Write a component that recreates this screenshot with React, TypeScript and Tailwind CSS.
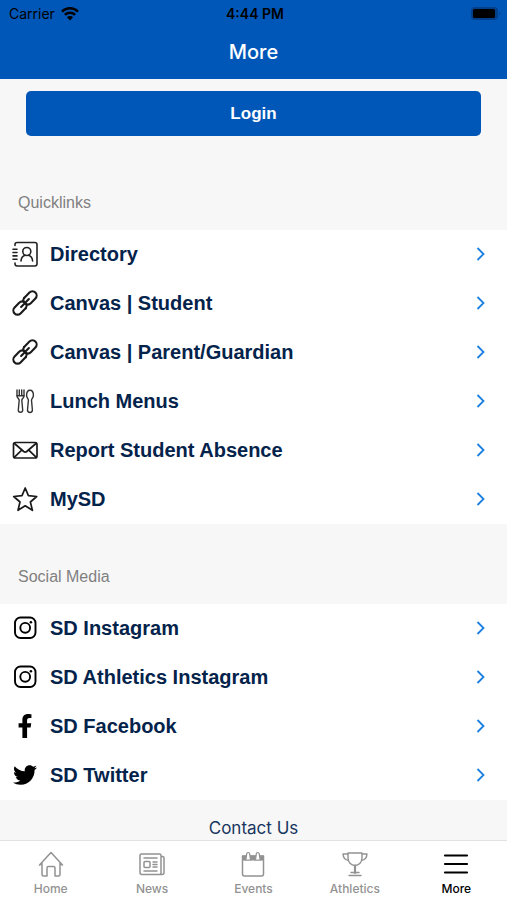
import type { ReactNode } from "react";
import { FaFacebookF, FaTwitter } from "react-icons/fa";
import { clsx } from "clsx";

function DirectoryIcon() {
  return (
    <svg width="26" height="26" viewBox="0 0 26 26" fill="none" stroke="#222" strokeWidth="1.6" strokeLinecap="round">
      <path d="M3 4.500V3.200Q3 1.500 5.200 1.500H22.800Q25 1.500 25 3.700V22.800Q25 25 22.800 25H5.200Q3 25 3 22.800V22" />
      <path d="M1 8.200h4M1 11.500h4M1 14.900h4M1 18.200h4" />
      <circle cx="14.800" cy="10.500" r="4" />
      <path d="M9 20c.2-3 1.700-5 4-5.800M20.600 20c-.2-3-1.700-5-4-5.800" />
    </svg>
  );
}

function LinkIcon() {
  return (
    <svg width="26" height="26" viewBox="0 0 26 26" fill="none" stroke="#1a1a1a" strokeWidth="2.100" strokeLinecap="round">
      <g transform="rotate(-45 13 13)">
        <path d="M10 17.200H2.500a4.200 4.200 0 0 1 0-8.400H9a4.200 4.200 0 0 1 4.200 3.600" />
        <path d="M16 8.800h7.500a4.200 4.200 0 0 1 0 8.400H17a4.200 4.200 0 0 1-4.200-3.600" />
        <path d="M10 17.200q2.200-.4 3-2.200M16 8.800q-2.200.4-3 2.200" />
        <path d="M7.500 13h4.500M14 13h4.500" />
      </g>
    </svg>
  );
}

function UtensilsIcon() {
  return (
    <svg width="26" height="26" viewBox="0 0 26 26" fill="none" stroke="#333" strokeWidth="1.400" strokeLinejoin="round" strokeLinecap="round">
      <path d="M5 2v6c0 2 2.200 2.300 2.200 4.300L6.300 22a2.200 2.200 0 0 0 4.400 0l-.9-9.700c0-2 2.200-2.300 2.200-4.300V2" />
      <path d="M7.300 2v5.500M9.700 2v5.500M5 7.800h7" />
      <path d="M18 2.200c-2.100 0-3.400 2.300-3.400 5.200 0 2.200 1.800 3 1.800 4.900L15.500 22a2.400 2.400 0 0 0 4.900 0l-.9-9.700c0-1.900 1.900-2.700 1.900-4.900 0-2.900-1.300-5.200-3.400-5.200Z" />
    </svg>
  );
}

function EnvelopeIcon() {
  return (
    <svg width="26" height="26" viewBox="0 0 26 26" fill="none" stroke="#1a1a1a" strokeWidth="1.700" strokeLinejoin="round" strokeLinecap="round">
      <rect x="1.500" y="5.500" width="23.500" height="15.500" rx="2" />
      <path d="M2.500 6.500l9.200 8q1.500 1.200 3 0L24 6.500M2.500 20.200l7.200-7M24 20.200l-7.200-7" />
    </svg>
  );
}

function StarIcon() {
  return (
    <svg width="26" height="26" viewBox="0 0 26 26" fill="none" stroke="#1a1a1a" strokeWidth="1.700" strokeLinejoin="round">
      <path d="M13.200 2l3.200 7.700 8.300.8-6.300 5.500 2 8.300-7.200-4.500L6 24.300l2-8.300-6.300-5.500 8.300-.8Z" />
    </svg>
  );
}

function InstagramIcon() {
  return (
    <svg width="26" height="26" viewBox="0 0 26 26" fill="none" stroke="#000">
      <rect x="3" y="2.500" width="20.500" height="20.500" rx="5.500" strokeWidth="1.900" />
      <circle cx="13.200" cy="12.800" r="4.900" strokeWidth="1.900" />
      <circle cx="18.900" cy="7.200" r="1.300" fill="#000" stroke="none" />
    </svg>
  );
}

function HomeIcon() {
  return (
    <svg width="26" height="26" viewBox="0 0 26 26" fill="none" stroke="currentColor" strokeWidth="1.500" strokeLinejoin="round" strokeLinecap="round">
      <path d="M4 12.500L1.500 14L13 1.500L24.500 14L22 12.500V23.500q0 1.500-1.500 1.500H17v-8q0-1.500-1.500-1.500h-5Q9 15.500 9 17v8H5.500Q4 25 4 23.500Z" />
    </svg>
  );
}

function NewsIcon() {
  return (
    <svg width="26" height="26" viewBox="0 0 26 26" fill="none" stroke="currentColor" strokeWidth="1.500" strokeLinejoin="round" strokeLinecap="round">
      <path d="M22 5V4.500q0-1.500-1.500-1.500H2.500Q1 3 1 4.500v17q0 2 2 2h20q2 0 2-2V7Q25 5.500 23.500 5.500H22v16q0 2-1.500 2" />
      <rect x="5" y="10.500" width="6" height="6" rx="1" />
      <path d="M5 7h13M14 11h4M14 13.500h4M14 16h4M5 20h13" />
    </svg>
  );
}

function EventsIcon() {
  return (
    <svg width="26" height="26" viewBox="0 0 26 26" fill="none" stroke="currentColor" strokeWidth="1.500" strokeLinejoin="round">
      <path d="M2.500 4.500h21V9.500h-21Z" fill="currentColor" stroke="none" />
      <path d="M2.500 8.500V23q0 2 2 2h17q2 0 2-2V5h-21Z" />
      <path d="M5 9q1.500-1 1.500-4.500Q6.500 1.500 8.200 1.500T9.900 4.500Q9.900 8 11.400 9ZM14.600 9q1.500-1 1.500-4.500Q16.100 1.500 17.800 1.500T19.500 4.500Q19.500 8 21 9Z" fill="#fff" strokeWidth="1.200" />
    </svg>
  );
}

function TrophyIcon() {
  return (
    <svg width="26" height="26" viewBox="0 0 26 26" fill="none" stroke="currentColor" strokeWidth="1.400" strokeLinejoin="round" strokeLinecap="round">
      <path d="M6 2h14v5c0 4.200-3 7.500-7 7.500S6 11.200 6 7Z" />
      <path d="M6 3H1c.2 3.500 1.800 6 5.500 6.300M20 3h5c-.2 3.500-1.800 6-5.500 6.300" />
      <path d="M13 14.500V22" strokeWidth="2.200" />
      <path d="M9 21.500h8M7 24.500h12" />
    </svg>
  );
}

function MenuIcon() {
  return (
    <svg width="26" height="26" viewBox="0 0 26 26" fill="none" stroke="currentColor" strokeWidth="2.200" strokeLinecap="round">
      <path d="M2 4.500h22M2 13h22M2 21.500h22" />
    </svg>
  );
}

function WifiIcon() {
  return (
    <svg width="18" height="14" viewBox="0 0 18 14" fill="none" stroke="#000" strokeWidth="2.500">
      <path d="M1 4.600a11.300 11.300 0 0 1 16 0M3.900 7.900a7.200 7.200 0 0 1 10.200 0" />
      <path d="M9 13.500L5.900 10.300a4.400 4.400 0 0 1 6.200 0Z" fill="#000" stroke="none" />
    </svg>
  );
}

function BatteryIcon() {
  return (
    <svg width="30" height="14" viewBox="0 0 30 14">
      <rect width="27" height="13" rx="4" fill="#003f8c" />
      <rect x="2" y="2" width="22" height="9" rx="1.500" fill="#000" />
      <path d="M28 4.500q2.500 2 0 4Z" fill="#003f8c" />
    </svg>
  );
}

function Chevron() {
  return (
    <svg width="10" height="14" viewBox="0 0 10 14" fill="none" stroke="#1c7fe0" strokeWidth="1.800">
      <path d="M1.500 1l6 6-6 6" />
    </svg>
  );
}

interface LinkItem {
  label: string;
  icon: ReactNode;
}

const quicklinks: LinkItem[] = [
  { label: "Directory", icon: <DirectoryIcon /> },
  { label: "Canvas | Student", icon: <LinkIcon /> },
  { label: "Canvas | Parent/Guardian", icon: <LinkIcon /> },
  { label: "Lunch Menus", icon: <UtensilsIcon /> },
  { label: "Report Student Absence", icon: <EnvelopeIcon /> },
  { label: "MySD", icon: <StarIcon /> },
];

const social: LinkItem[] = [
  { label: "SD Instagram", icon: <InstagramIcon /> },
  { label: "SD Athletics Instagram", icon: <InstagramIcon /> },
  { label: "SD Facebook", icon: <FaFacebookF size={24} /> },
  { label: "SD Twitter", icon: <FaTwitter size={24} /> },
];

const tabs: LinkItem[] = [
  { label: "Home", icon: <HomeIcon /> },
  { label: "News", icon: <NewsIcon /> },
  { label: "Events", icon: <EventsIcon /> },
  { label: "Athletics", icon: <TrophyIcon /> },
  { label: "More", icon: <MenuIcon /> },
];

function LinkSection({ title, items, className }: { title: string; items: LinkItem[]; className?: string }) {
  return (
    <section className={className}>
      <h2 className="px-[18px] pb-[15px] text-base leading-6 text-[#808080]">{title}</h2>
      <ul className="bg-white">
        {items.map((item) => (
          <li key={item.label}>
            <a href="#" className="flex h-[49px] items-center pb-px pl-3 pr-[21px] text-black">
              <span className="flex w-[26px] justify-center">{item.icon}</span>
              <span className="ml-3 flex-1 text-[20px] font-bold leading-6 text-[#04234b]">{item.label}</span>
              <Chevron />
            </a>
          </li>
        ))}
      </ul>
    </section>
  );
}

export default function App() {
  return (
    <div className="flex min-h-screen flex-col bg-[#f7f7f7] font-['Liberation_Sans',Arial,sans-serif]">
      <header className="bg-[#0057b8] font-[Inter,sans-serif]">
        <div className="grid h-7 grid-cols-3 items-center pl-[9px] pr-[6px] text-sm text-black">
          <span className="flex items-center gap-1.5">
            Carrier <WifiIcon />
          </span>
          <span className="text-center font-semibold">4:44 PM</span>
          <span className="flex justify-end">
            <BatteryIcon />
          </span>
        </div>
        <h1 className="h-[51px] pt-2.5 text-center text-[20px] font-medium leading-7 text-white">More</h1>
      </header>

      <main className="flex-1">
        <div className="px-[26px] pt-3">
          <button type="button" className="h-[45px] w-full rounded-[5px] bg-[#0057b8] text-[17px] font-bold text-white">
            Login
          </button>
        </div>
        <LinkSection title="Quicklinks" items={quicklinks} className="pt-[55px]" />
        <LinkSection title="Social Media" items={social} className="pt-[41px]" />
        <div className="pt-4 text-center font-[Inter,sans-serif]">
          <a href="#" className="text-[17px] leading-6 text-[#17355e]">
            Contact Us
          </a>
        </div>
      </main>

      <nav className="sticky bottom-0 grid h-[60px] grid-cols-5 border-t border-[#e2e2e2] bg-white font-[Inter,sans-serif]">
        {tabs.map((tab) => (
          <a
            key={tab.label}
            href="#"
            className={clsx(
              "flex flex-col items-center gap-1 pt-2.5 text-xs font-medium leading-4",
              tab.label === "More" ? "text-black" : "text-[#929292]"
            )}
          >
            {tab.icon}
            {tab.label}
          </a>
        ))}
      </nav>
    </div>
  );
}
